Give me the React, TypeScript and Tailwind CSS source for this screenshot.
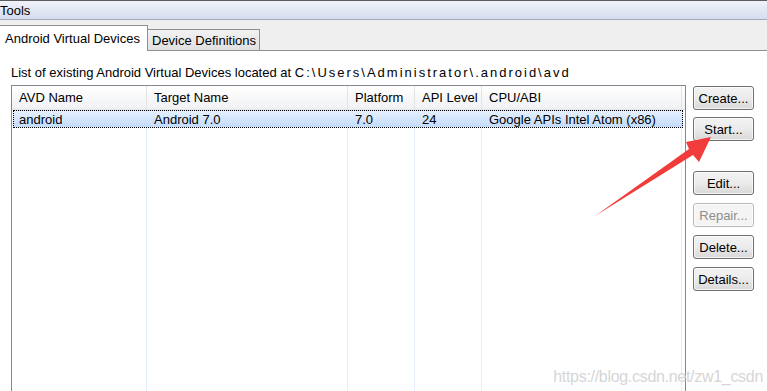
import React from 'react';

const columns = ['AVD Name', 'Target Name', 'Platform', 'API Level', 'CPU/ABI'];
const row = ['android', 'Android 7.0', '7.0', '24', 'Google APIs Intel Atom (x86)'];
const gridCols = 'grid grid-cols-[135px_201px_67px_67px_200px]';

function WinButton({ label, disabled }: { label: string; disabled?: boolean }) {
  return (
    <button
      className={`w-[61px] h-[24px] rounded-[3px] border text-[13px] leading-none flex items-center justify-center shadow-[inset_0_0_0_1px_rgba(255,255,255,0.7)] ${
        disabled
          ? 'border-[#b5b9bc] bg-[#f4f4f4] text-[#8d8d8d]'
          : 'border-[#707070] bg-gradient-to-b from-[#f3f3f3] via-[#ebebeb] to-[#d8d8d8] text-black'
      }`}
    >
      {label}
    </button>
  );
}

export default function App() {
  return (
    <div className="relative w-[767px] h-[391px] overflow-hidden bg-white text-[13px] text-black font-['Liberation_Sans',Arial,sans-serif]">
      {/* Title bar */}
      <div className="h-px bg-[#5c5c5c]" />
      <div className="h-[19px] bg-gradient-to-b from-[#f1f3fa] to-[#d5dcef] border-b border-[#a6aab6] flex items-center leading-none">
        Tools
      </div>

      {/* Tabs */}
      <div className="h-[31px] bg-[#efefef] border-b border-[#8d8f94] flex items-end">
        <div className="h-[26px] -mb-px bg-white border-t border-r border-[#8d8f94] w-[148px] flex items-center pl-[5px] leading-none">
          Android Virtual Devices
        </div>
        <div className="h-[21px] w-[112px] border-t border-r border-[#8d8f94] bg-gradient-to-b from-[#f2f2f2] to-[#e0e0e0] flex items-center pl-[4px] leading-none">
          Device Definitions
        </div>
      </div>

      {/* Content */}
      <div className="pl-[11px] pt-[15px] leading-none h-[34px] whitespace-nowrap">
        List of existing Android Virtual Devices located at{' '}
        <span className="tracking-[2px]">C:\Users\Administrator\.android\avd</span>
      </div>

      <div className="flex pl-[11px] gap-[7px] h-[310px]">
        {/* Table */}
        <div className="w-[675px] border-l border-t border-r border-[#828790] flex flex-col">
          <div className={`${gridCols} h-[24px] bg-gradient-to-b from-white to-[#f0f1f3] border-b border-[#e3e4e6]`}>
            {columns.map((c) => (
              <div key={c} className="border-r border-[#e2e3e5] flex items-center pl-[7px] leading-none">
                {c}
              </div>
            ))}
          </div>
          <div className="h-[18px] ml-px mr-[2px] border border-dotted border-black bg-gradient-to-b from-[#e5f0fd] to-[#c3dbfb]">
            <div className={`${gridCols} h-full -ml-[2px]`}>
              {row.map((v, i) => (
                <div key={i} className="flex items-center pl-[7px] leading-none">
                  {v}
                </div>
              ))}
            </div>
          </div>
          <div className={`${gridCols} flex-1`}>
            {columns.map((c) => (
              <div key={c} className="border-r border-[#e6eefa]" />
            ))}
          </div>
        </div>

        {/* Buttons */}
        <div className="flex flex-col pt-[1px]">
          <WinButton label="Create..." />
          <div className="mt-[7px]">
            <WinButton label="Start..." />
          </div>
          <div className="mt-[30px] flex flex-col gap-[8px]">
            <WinButton label="Edit..." />
            <WinButton label="Repair..." disabled />
            <WinButton label="Delete..." />
            <WinButton label="Details..." />
          </div>
        </div>
      </div>

      {/* Red arrow annotation */}
      <svg className="absolute left-0 top-0 pointer-events-none" width="767" height="391">
        <polygon points="595,216 689,149 686,142 711,137 699,162 693,155" fill="#f23c3c" />
      </svg>

      {/* Watermark */}
      <div className="absolute right-[4px] bottom-[6px] text-[16px] leading-none tracking-[-0.3px] text-[#d6d6d6] font-['Liberation_Sans_Narrow','Liberation_Sans',sans-serif] [text-shadow:0_0_1px_#fff]">
        https://blog.csdn.net/zw1_csdn
      </div>
    </div>
  );
}
